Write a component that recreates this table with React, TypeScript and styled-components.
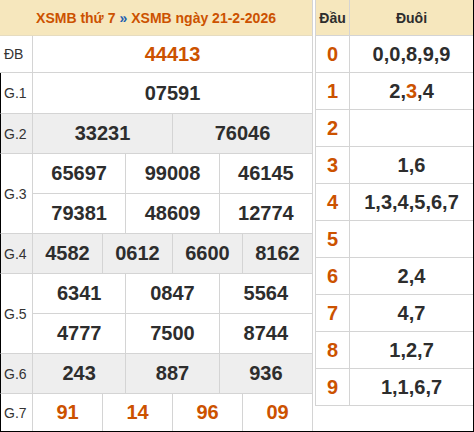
import React from "react";
import styled, { createGlobalStyle } from "styled-components";

const ORANGE = "#cc5200";
const DARK = "#2d2d2d";
const LINE = "#d4d4d4";
const BEIGE = "#f6e7bd";
const SHADE = "#eeeeee";

const Global = createGlobalStyle`
  html, body { margin: 0; padding: 0; background: #fff; }
  body { font-family: "Liberation Sans", Arial, sans-serif; }
`;

const Page = styled.div`
  width: 474px;
  height: 432px;
  box-sizing: border-box;
  border-right: 1px solid #000;
  border-bottom: 1px solid #000;
  display: flex;
  align-items: flex-start;
  gap: 2px;
  overflow: hidden;
`;

const ResultGrid = styled.div`
  width: 313px;
  flex: none;
  display: grid;
  grid-template-columns: 33px repeat(12, 1fr);
  grid-template-rows: 36px 37px 41px repeat(7, 40px) 37px;
`;

const Cell = styled.div<{ $col: string; $row: string; $shade?: boolean; $last?: boolean }>`
  grid-column: ${(p) => p.$col};
  grid-row: ${(p) => p.$row};
  box-sizing: border-box;
  display: flex;
  align-items: center;
  justify-content: center;
  border-right: 1px solid ${LINE};
  border-bottom: ${(p) => (p.$last ? "none" : `1px solid ${LINE}`)};
  background: ${(p) => (p.$shade ? SHADE : "#fff")};
`;

const TitleCell = styled(Cell)`
  background: ${BEIGE};
  border-bottom: 1px solid #e6dcc0;
  font-size: 14px;
  font-weight: bold;
  color: ${ORANGE};
  white-space: nowrap;
`;

const Sep = styled.span`
  color: #1f5fb0;
  margin: 0 4px;
`;

const LabelCell = styled(Cell)<{ $edge?: boolean }>`
  justify-content: flex-start;
  font-size: 14px;
  color: #333;
  border-left: ${(p) => (p.$edge ? "1px solid #000" : "none")};
  padding-left: ${(p) => (p.$edge ? "3px" : "4px")};
`;

const Num = styled.span<{ $hot?: boolean }>`
  font-size: 20px;
  font-weight: bold;
  color: ${(p) => (p.$hot ? ORANGE : DARK)};
`;

const TailTable = styled.div`
  width: 158px;
  flex: none;
  box-sizing: border-box;
  border-left: 1px solid ${LINE};
  display: grid;
  grid-template-columns: 34px 1fr;
  grid-template-rows: 36px repeat(10, 37px);
`;

const TailCell = styled.div<{ $head?: boolean; $divider?: boolean }>`
  box-sizing: border-box;
  display: flex;
  align-items: center;
  justify-content: center;
  border-bottom: 1px solid ${LINE};
  border-right: ${(p) => (p.$divider ? `1px solid ${LINE}` : "none")};
  background: ${(p) => (p.$head ? BEIGE : "#fff")};
  font-weight: bold;
  font-size: ${(p) => (p.$head ? "14px" : "20px")};
  color: ${DARK};
`;

type Prize = { label: string; rows: string[][]; shade?: boolean; hot?: boolean };

const prizes: Prize[] = [
  { label: "ĐB", rows: [["44413"]], hot: true },
  { label: "G.1", rows: [["07591"]] },
  { label: "G.2", rows: [["33231", "76046"]], shade: true },
  { label: "G.3", rows: [["65697", "99008", "46145"], ["79381", "48609", "12774"]] },
  { label: "G.4", rows: [["4582", "0612", "6600", "8162"]], shade: true },
  { label: "G.5", rows: [["6341", "0847", "5564"], ["4777", "7500", "8744"]] },
  { label: "G.6", rows: [["243", "887", "936"]], shade: true },
  { label: "G.7", rows: [["91", "14", "96", "09"]], hot: true },
];

const tails: { head: string; parts: { v: string; hot?: boolean }[] }[] = [
  { head: "0", parts: [{ v: "0" }, { v: "0" }, { v: "8" }, { v: "9" }, { v: "9" }] },
  { head: "1", parts: [{ v: "2" }, { v: "3", hot: true }, { v: "4" }] },
  { head: "2", parts: [] },
  { head: "3", parts: [{ v: "1" }, { v: "6" }] },
  { head: "4", parts: [{ v: "1" }, { v: "3" }, { v: "4" }, { v: "5" }, { v: "6" }, { v: "7" }] },
  { head: "5", parts: [] },
  { head: "6", parts: [{ v: "2" }, { v: "4" }] },
  { head: "7", parts: [{ v: "4" }, { v: "7" }] },
  { head: "8", parts: [{ v: "1" }, { v: "2" }, { v: "7" }] },
  { head: "9", parts: [{ v: "1" }, { v: "1" }, { v: "6" }, { v: "7" }] },
];

function ResultTable() {
  const cells: React.ReactNode[] = [];
  let row = 2;
  prizes.forEach((p, pi) => {
    const span = p.rows.length;
    const lastPrize = pi === prizes.length - 1;
    cells.push(
      <LabelCell
        key={`l${pi}`}
        $col="1"
        $row={`${row} / span ${span}`}
        $shade={p.shade}
        $last={lastPrize}
        $edge={pi > 0}
      >
        {p.label}
      </LabelCell>
    );
    p.rows.forEach((nums, ri) => {
      const w = 12 / nums.length;
      nums.forEach((n, ni) => {
        cells.push(
          <Cell
            key={`c${pi}-${ri}-${ni}`}
            $col={`${2 + ni * w} / span ${w}`}
            $row={`${row + ri}`}
            $shade={p.shade}
            $last={lastPrize}
          >
            <Num $hot={p.hot}>{n}</Num>
          </Cell>
        );
      });
    });
    row += span;
  });
  return (
    <ResultGrid>
      <TitleCell $col="1 / span 13" $row="1">
        XSMB thứ 7<Sep>»</Sep>XSMB ngày 21-2-2026
      </TitleCell>
      {cells}
    </ResultGrid>
  );
}

function TailBoard() {
  return (
    <TailTable>
      <TailCell $head $divider>Đầu</TailCell>
      <TailCell $head>Đuôi</TailCell>
      {tails.map((t) => (
        <React.Fragment key={t.head}>
          <TailCell $divider>
            <Num $hot>{t.head}</Num>
          </TailCell>
          <TailCell>
            {t.parts.map((pt, i) => (
              <React.Fragment key={i}>
                {i > 0 && <Num>,</Num>}
                <Num $hot={pt.hot}>{pt.v}</Num>
              </React.Fragment>
            ))}
          </TailCell>
        </React.Fragment>
      ))}
    </TailTable>
  );
}

export default function App() {
  return (
    <>
      <Global />
      <Page>
        <ResultTable />
        <TailBoard />
      </Page>
    </>
  );
}
